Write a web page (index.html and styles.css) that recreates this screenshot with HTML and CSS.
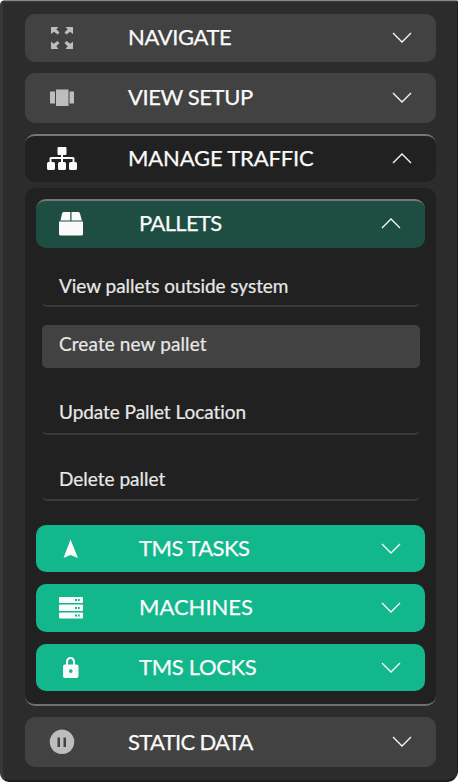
FILE: index.html
```
<!DOCTYPE html>
<html lang="en">
<head>
<meta charset="utf-8">
<title>Menu</title>
<link rel="stylesheet" href="styles.css">
</head>
<body>
<nav class="panel">
  <button class="bar navigate">
    <svg class="icon dim" viewBox="0 0 24 24"><path d="M1 1h7.500L6.300 3.300 9.500 6.500 7.500 8.500 4 5.700 1 8zM23 1v7L20 5.700 16.500 8.500 14.500 6.500 17.700 3.300 15.500 1zM1 23v-7.500l2.700 2.300L7.500 15l2 2-3.200 3.200L8.500 23zM23 23h-7.500l2.200-2.800-3.200-3.200 2-2 3.800 2.800 2.700-2.300z"/></svg>
    <span class="label">NAVIGATE</span>
    <svg class="chevron" viewBox="0 0 20 12"><path d="M1 1l9 9 9-9"/></svg>
  </button>
  <button class="bar view">
    <svg class="icon dim" viewBox="0 0 24 24"><path d="M0 5.500h5v12H0zM6 3.500h12.500v16.500H6zM19.500 5.500h4.500v12h-4.500z"/></svg>
    <span class="label">VIEW SETUP</span>
    <svg class="chevron" viewBox="0 0 20 12"><path d="M1 1l9 9 9-9"/></svg>
  </button>
  <button class="bar manage">
    <svg class="icon wide" viewBox="0 0 30 24"><path d="M11.500 0h7q1 0 1 1v6q0 1-1 1H16v2h10q1.500 0 1.500 1.500V15h1q1.500 0 1.500 1.500v5q0 1.500-1.500 1.500h-5q-1.500 0-1.500-1.500v-5q0-1.500 1.500-1.500h2v-3H16v3h1.500q1.500 0 1.500 1.500v5q0 1.500-1.500 1.500h-5q-1.500 0-1.500-1.500v-5q0-1.500 1.500-1.500H14v-3H4.500v3h2Q8 15 8 16.500v5Q8 23 6.500 23h-5Q0 23 0 21.500v-5Q0 15 1.500 15h1v-3.500Q2.500 10 4 10h10V8h-2.500q-1 0-1-1V1q0-1 1-1z"/></svg>
    <span class="label">MANAGE TRAFFIC</span>
    <svg class="chevron" viewBox="0 0 20 12"><path d="M1 10l9-9 9 9"/></svg>
  </button>
  <section class="group">
    <button class="bar pallets">
      <svg class="icon" viewBox="0 0 24 24"><path d="M4 0h7.300v8.500H1.500L3 1.500Q3.300 0 4.500 0zM12.500 0h6.700q1.300 0 1.700 1.300l2 7.200H12.500zM0 9.500h24V22q0 1.500-1.500 1.500h-21Q0 23.500 0 22z"/></svg>
      <span class="label">PALLETS</span>
      <svg class="chevron" viewBox="0 0 20 12"><path d="M1 10l9-9 9 9"/></svg>
    </button>
    <a class="item outside"><span>View pallets outside system</span></a>
    <a class="item create"><span>Create new pallet</span></a>
    <a class="item update"><span>Update Pallet Location</span></a>
    <a class="item delete"><span>Delete pallet</span></a>
    <button class="bar tasks">
      <svg class="icon" viewBox="0 0 24 24"><path d="M11.500 2.500L19 21l-7.500-3L4.500 21z"/></svg>
      <span class="label">TMS TASKS</span>
      <svg class="chevron" viewBox="0 0 20 12"><path d="M1 1l9 9 9-9"/></svg>
    </button>
    <button class="bar machines">
      <svg class="icon" viewBox="0 0 24 24"><path fill-rule="evenodd" d="M1 1h22q1 0 1 1v4q0 1-1 1H1Q0 7 0 6V2q0-1 1-1zM1 8.500h22q1 0 1 1V14q0 1-1 1H1q-1 0-1-1V9.500q0-1 1-1zM1 16.500h22q1 0 1 1v4q0 1-1 1H1q-1 0-1-1v-4q0-1 1-1zM16 3h2v2h-2zM19 3h1.700v2H19zM16 11h2v2h-2zM19 11h1.700v2H19zM16 18.500h2v2h-2zM19 18.500h1.700v2H19z"/></svg>
      <span class="label">MACHINES</span>
      <svg class="chevron" viewBox="0 0 20 12"><path d="M1 1l9 9 9-9"/></svg>
    </button>
    <button class="bar locks">
      <svg class="icon" viewBox="0 0 24 24"><path fill-rule="evenodd" d="M7 8.500V6.500Q7 1 11.500 1T16 6.500v2h1.500q2 0 2 2V20q0 2-2 2H6q-2 0-2-2v-9.500q0-2 2-2zm2 0h5v-2Q14 3 11.500 3T9 6.500zM11.800 13.300a1.800 1.800 0 1 0 .01 0z"/></svg>
      <span class="label">TMS LOCKS</span>
      <svg class="chevron" viewBox="0 0 20 12"><path d="M1 1l9 9 9-9"/></svg>
    </button>
  </section>
  <button class="bar static">
    <svg class="icon dim" viewBox="0 0 24 24"><path fill-rule="evenodd" d="M12-.5a12.300 12.300 0 1 0 .01 0zM7.500 7.500H10V17H7.500zM13.500 7.500H16V17h-2.500z"/></svg>
    <span class="label">STATIC DATA</span>
    <svg class="chevron" viewBox="0 0 20 12"><path d="M1 1l9 9 9-9"/></svg>
  </button>
</nav>
</body>
</html>
```
FILE: styles.css
```
* { box-sizing: border-box; }
body {
  margin: 0;
  background: #fff;
  font-family: Lato, sans-serif;
}
.panel {
  width: 458px;
  height: 782px;
  padding: 13px 20px 0 22px;
  background: #2c2c2c;
  border-top: 1px solid #858987;
  border-left: 3px solid #383838;
  border-right: 1px solid #202020;
  border-bottom: 2px solid #1c1c1c;
  border-radius: 5px 2px 11px 9px;
  box-shadow: inset 0 2px 0 -1px #383b39;
}
.bar {
  display: flex;
  align-items: center;
  width: 411px;
  padding: 0 24px 0 25px;
  border: 0;
  border-radius: 10px;
  background: #424242;
  color: #fafafa;
  font: 400 22px/26px Lato, sans-serif;
  text-align: left;
}
.icon { flex: none; width: 24px; height: 24px; fill: currentColor; overflow: visible; }
.dim { color: #bdbdbd; }
.wide { width: 30px; margin: 0 -3px; }
.label { flex: 1; margin-left: 54px; padding-bottom: 2px; white-space: nowrap; -webkit-text-stroke: .25px; }
.chevron {
  flex: none;
  width: 20px;
  height: 12px;
  fill: none;
  stroke: currentColor;
  stroke-width: 1.3;
  overflow: visible;
}
.navigate { height: 48px; letter-spacing: -.4px; }
.view { height: 50px; margin-top: 11px; letter-spacing: -.42px; }
.manage { height: 48px; margin-top: 11px; padding-bottom: 1px; background: #212121; border-top: 2px solid #777; letter-spacing: -.16px; }
.group {
  width: 411px;
  height: 518px;
  margin-top: 6px;
  padding: 11px;
  background: #212121;
  border-bottom: 2px solid #707070;
  border-radius: 10px;
}
.group .bar { width: 389px; padding: 0 24px 0 23px; background: #12b78c; }
.group .label { margin-left: 56px; }
.group .pallets { height: 49px; padding-bottom: 2px; background: #1d4e41; border-top: 2px solid #777; letter-spacing: -.65px; }
.item {
  display: flex;
  align-items: center;
  width: 378px;
  margin-left: 5.5px;
  padding: 0 17.5px;
  border-bottom: 2px solid #3a3a3a;
  border-radius: 5px;
  color: #e8e8e8;
  font-size: 19px;
  line-height: 24px;
  -webkit-text-stroke: .2px;
}
.outside { height: 44px; margin-top: 15px; padding-top: 4px; letter-spacing: -.04px; }
.create { height: 43px; margin-top: 18px; padding-bottom: 5px; background: #424242; border: 0; letter-spacing: .1px; }
.update { height: 44px; margin-top: 23px; padding-bottom: 1px; letter-spacing: -.05px; }
.delete { height: 43px; margin-top: 23px; }
.tasks { height: 47px; margin-top: 24px; letter-spacing: -.52px; }
.machines { height: 48px; margin-top: 12px; }
.locks { height: 47px; margin-top: 12px; letter-spacing: -.32px; }
.static { height: 50px; margin-top: 11px; letter-spacing: -.68px; }
.static .label { padding-bottom: 0; }
```
